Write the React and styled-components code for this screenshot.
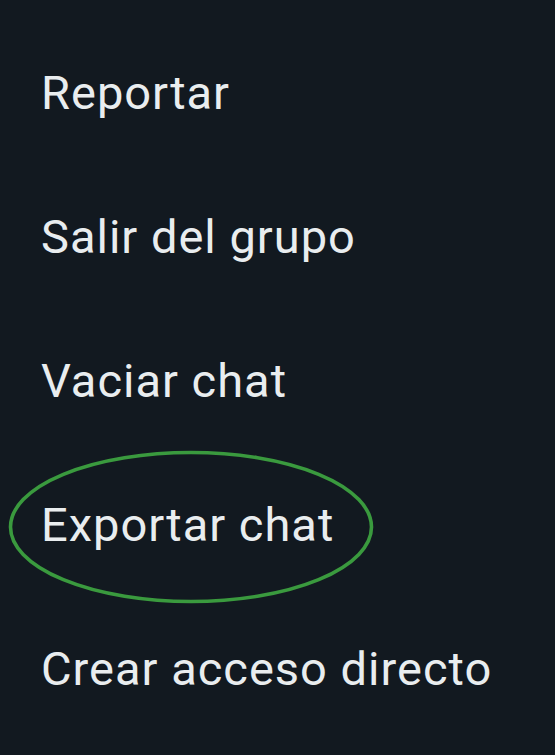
import React from "react";
import styled, { createGlobalStyle } from "styled-components";

const Global = createGlobalStyle`
  html, body {
    margin: 0;
    padding: 0;
    background: #121920;
  }
  body {
    width: 555px;
    height: 755px;
    overflow: hidden;
  }
`;

const Menu = styled.ul`
  list-style: none;
  margin: 0;
  padding: 21px 0 0 41px;
  width: 555px;
  height: 755px;
  box-sizing: border-box;
  background: #121920;
  display: flex;
  flex-direction: column;
`;

const Item = styled.li`
  position: relative;
  height: 144px;
  line-height: 144px;
  font-family: Roboto, "Noto Sans", sans-serif;
  font-size: 47px;
  letter-spacing: 1px;
  font-weight: 400;
  color: #e9edef;
  white-space: nowrap;
`;

const Label = styled.span`
  position: relative;
  z-index: 1;
`;

const Highlight = styled.svg`
  position: absolute;
  left: -33px;
  top: -3px;
  width: 366px;
  height: 154px;
  overflow: visible;
  pointer-events: none;
`;

const items = [
  "Reportar",
  "Salir del grupo",
  "Vaciar chat",
  "Exportar chat",
  "Crear acceso directo",
];

export default function App() {
  return (
    <>
      <Global />
      <Menu>
        {items.map((t) => (
          <Item key={t}>
            <Label>{t}</Label>
            {t === "Exportar chat" && (
              <Highlight viewBox="0 0 366 154">
                <ellipse
                  cx="183"
                  cy="77"
                  rx="180.5"
                  ry="74.5"
                  fill="none"
                  stroke="#3a9a3e"
                  strokeWidth="3.6"
                />
              </Highlight>
            )}
          </Item>
        ))}
      </Menu>
    </>
  );
}
